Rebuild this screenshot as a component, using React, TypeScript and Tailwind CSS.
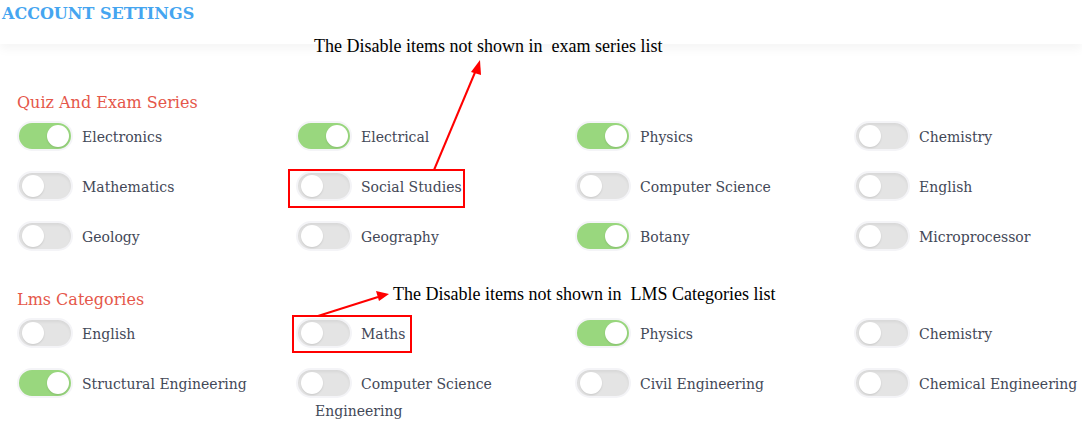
import React from 'react'

type Item = { label: string; on: boolean }

const QUIZ: Item[] = [
  { label: 'Electronics', on: true },
  { label: 'Electrical', on: true },
  { label: 'Physics', on: true },
  { label: 'Chemistry', on: false },
  { label: 'Mathematics', on: false },
  { label: 'Social Studies', on: false },
  { label: 'Computer Science', on: false },
  { label: 'English', on: false },
  { label: 'Geology', on: false },
  { label: 'Geography', on: false },
  { label: 'Botany', on: true },
  { label: 'Microprocessor', on: false },
]

const LMS: Item[] = [
  { label: 'English', on: false },
  { label: 'Maths', on: false },
  { label: 'Physics', on: true },
  { label: 'Chemistry', on: false },
  { label: 'Structural Engineering', on: true },
  { label: 'Computer Science Engineering', on: false },
  { label: 'Civil Engineering', on: false },
  { label: 'Chemical Engineering', on: false },
]

function Toggle({ on }: { on: boolean }) {
  return (
    <span
      className={`relative inline-block align-[-9px] w-[56px] h-[30px] rounded-full border-2 border-[#f4f4f7] mr-[9px] -ml-[19px] ${
        on ? 'bg-[#99d77e]' : 'bg-[#e4e4e4] shadow-[inset_0_2px_3px_rgba(0,0,0,0.06)]'
      }`}
    >
      <span
        className={`absolute top-[2px] w-[22px] h-[22px] rounded-full bg-white shadow-[0_1px_2px_rgba(0,0,0,0.12)] ${
          on ? 'left-[28px]' : 'left-[3px]'
        }`}
      />
    </span>
  )
}

function Section({ title, items }: { title: string; items: Item[] }) {
  return (
    <div>
      <h3 className="text-[16px] leading-[24px] text-[#e5574a] font-['DejaVu_Serif',serif] font-normal">{title}</h3>
      <div className="grid grid-cols-[repeat(4,279px)] mt-[5px]">
        {items.map((it, i) => (
          <div key={i} className="pl-[19px] pr-[30px] pt-[1px] h-[50px] text-[14px] leading-[26px] text-[#434857] font-['DejaVu_Serif',serif]">
            <Toggle on={it.on} />
            {it.label}
          </div>
        ))}
      </div>
    </div>
  )
}

export default function App() {
  return (
    <div className="relative w-[1082px] h-[430px] overflow-hidden bg-white">
      <header className="h-[44px] pt-[2px] pl-[2px] bg-white shadow-[0_5px_10px_rgba(0,0,0,0.045)]">
        <h1 className="text-[16px] leading-[24px] font-bold text-[#45a5f0] font-['DejaVu_Serif',serif]">ACCOUNT SETTINGS</h1>
      </header>

      <main className="flex flex-col gap-[18px] pl-[17px] pt-[47px]">
        <Section title="Quiz And Exam Series" items={QUIZ} />
        <Section title="Lms Categories" items={LMS} />
      </main>

      {/* annotations */}
      <p className="absolute left-[314px] top-[34px] text-[18px] leading-[24px] text-black font-['Liberation_Serif',serif] whitespace-pre">
        The Disable items not shown in  exam series list
      </p>
      <p className="absolute left-[393px] top-[282px] text-[18px] leading-[24px] text-black font-['Liberation_Serif',serif] whitespace-pre">
        The Disable items not shown in  LMS Categories list
      </p>
      <div className="absolute left-[288px] top-[169px] w-[177px] h-[39px] border-2 border-[#ff0000]" />
      <div className="absolute left-[292px] top-[315px] w-[120px] h-[38px] border-2 border-[#ff0000]" />
      <svg className="absolute left-0 top-0 pointer-events-none" width="1082" height="430">
        <line x1="434" y1="170" x2="476" y2="70" stroke="#ff0000" strokeWidth="2" />
        <polygon points="480,60 471,72 481,75" fill="#ff0000" />
        <line x1="318" y1="316" x2="378" y2="297" stroke="#ff0000" strokeWidth="2" />
        <polygon points="389,294 376,291 379,301" fill="#ff0000" />
      </svg>
    </div>
  )
}
